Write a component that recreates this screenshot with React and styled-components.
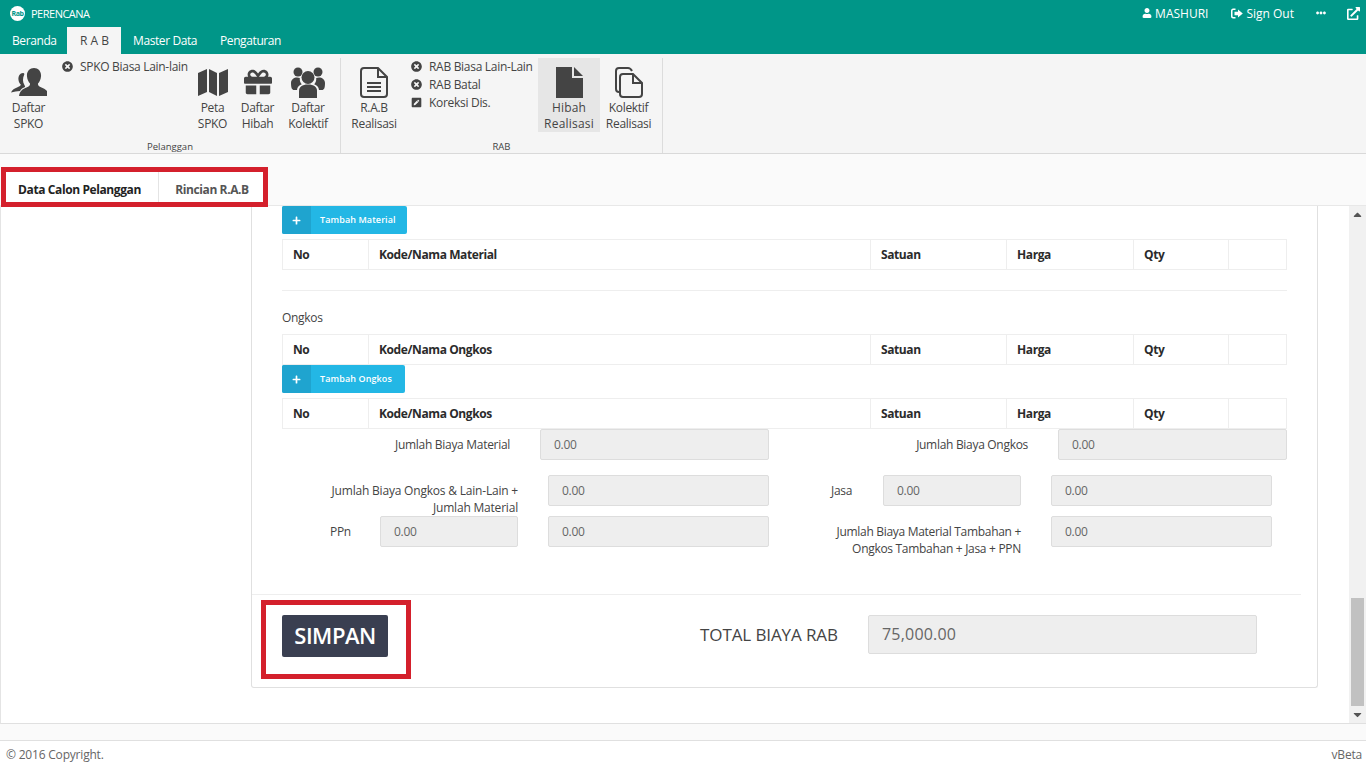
import React from 'react';
import styled, { createGlobalStyle } from 'styled-components';
import {
  FaGift, FaTimesCircle, FaPenSquare, FaUser, FaEllipsisH,
  FaExternalLinkAlt, FaPlus, FaCaretUp, FaCaretDown,
} from 'react-icons/fa';

const GlobalStyle = createGlobalStyle`
  html, body {
    margin: 0;
    padding: 0;
    height: 768px;
    overflow: hidden;
    background: #fff;
    font-family: "Open Sans", "Noto Sans", sans-serif;
    font-size: 12px;
    letter-spacing: -0.3px;
    color: #333;
  }
  * { box-sizing: border-box; }
`;

const Page = styled.div`
  position: relative;
  width: 1366px;
  height: 768px;
  display: flex;
  flex-direction: column;
`;

const Header = styled.header`
  height: 54px;
  background: #009688;
  color: #fff;
  display: flex;
  flex-direction: column;
`;

const TitleBar = styled.div`
  height: 27px;
  display: flex;
  align-items: center;
  padding: 0 6px 1px 10px;
`;

const Logo = styled.span`
  width: 15px;
  height: 15px;
  border-radius: 50%;
  background: #fff;
  color: #009688;
  font-size: 7px;
  font-weight: 700;
  display: flex;
  align-items: center;
  justify-content: center;
  margin-right: 6px;
  letter-spacing: -0.5px;
`;

const AppName = styled.span`
  font-size: 11px;
  flex: 1;
  letter-spacing: -0.5px;
`;

const TopAction = styled.span`
  display: flex;
  align-items: center;
  gap: 3px;
  font-size: 12px;
  letter-spacing: 0;
  margin-left: ${p => p.$gap}px;
  svg { display: block; }
`;

const TabBar = styled.nav`
  height: 27px;
  display: flex;
`;

const MenuTab = styled.div`
  height: 27px;
  width: ${p => p.$width}px;
  padding-left: ${p => p.$pad}px;
  display: flex;
  align-items: center;
  font-size: 12px;
  white-space: nowrap;
  letter-spacing: ${p => (p.$active ? '0' : '-0.4px')};
  background: ${p => (p.$active ? '#f5f5f5' : 'transparent')};
  color: ${p => (p.$active ? '#444' : '#fff')};
`;

const Ribbon = styled.div`
  height: 100px;
  background: #f5f5f5;
  border-bottom: 1px solid #d9d9d9;
  display: flex;
  padding-top: 4px;
`;

const RibbonGroup = styled.section`
  width: ${p => p.$width}px;
  height: 95px;
  border-right: 1px solid #dcdcdc;
  display: flex;
  flex-direction: column;
`;

const RibbonItems = styled.div`
  flex: 1;
  display: flex;
  align-items: flex-start;
  padding-left: ${p => p.$pad}px;
`;

const GroupName = styled.div`
  height: 16px;
  padding-top: 3px;
  text-align: center;
  font-size: 9.5px;
  letter-spacing: 0;
  line-height: 13px;
  color: #444;
`;

const BigButton = styled.div`
  width: ${p => p.$width}px;
  height: 74px;
  display: flex;
  flex-direction: column;
  align-items: center;
  text-align: center;
  font-size: 12px;
  line-height: 16px;
  letter-spacing: ${p => (p.$active ? '0.2px' : '-0.3px')};
  color: #444;
  background: ${p => (p.$active ? '#e6e6e6' : 'transparent')};
  margin-right: ${p => p.$after || 0}px;
`;

const BigIcon = styled.span`
  height: 42px;
  display: flex;
  align-items: center;
  justify-content: center;
  padding-top: 6px;
  color: #444;
`;

const SmallList = styled.div`
  width: ${p => p.$width}px;
  margin-top: -1px;
  display: flex;
  flex-direction: column;
`;

const SmallItem = styled.div`
  height: 18px;
  display: flex;
  align-items: center;
  gap: 7px;
  font-size: 12px;
  color: #444;
  white-space: nowrap;
`;

const TabStrip = styled.div`
  height: 52px;
  background: #fafafa;
  border-bottom: 1px solid #e8e8e8;
  display: flex;
  align-items: flex-end;
  padding-left: 1px;
`;

const PageTab = styled.div`
  height: 35px;
  padding-top: 3px;
  width: ${p => p.$width}px;
  display: flex;
  align-items: center;
  justify-content: center;
  font-size: 12px;
  font-weight: 700;
  letter-spacing: -0.4px;
  color: ${p => (p.$active ? '#222' : '#555')};
  background: #fff;
  border-right: ${p => (p.$active ? '1px solid #e4e4e4' : 'none')};
`;

const Body = styled.div`
  height: 518px;
  display: flex;
  border-left: 1px solid #e4e4e4;
  border-bottom: 1px solid #e0e0e0;
  overflow: hidden;
`;

const Scroller = styled.div`
  flex: 1;
  padding-left: 250px;
  overflow: hidden;
`;

const Card = styled.div`
  width: 1067px;
  height: 482px;
  border: 1px solid #e0e0e0;
  border-top: none;
  border-radius: 0 0 3px 3px;
  display: flex;
  flex-direction: column;
  padding-left: 30px;
`;

const AddButton = styled.div`
  width: ${p => p.$width}px;
  height: 28px;
  background: #23b7e5;
  border-radius: 2px;
  display: flex;
  color: #fff;
  font-size: 9px;
  font-weight: 600;
  letter-spacing: 0.1px;
`;

const AddIcon = styled.span`
  width: 29px;
  background: #1fa4cf;
  border-radius: 2px 0 0 2px;
  display: flex;
  align-items: center;
  justify-content: center;
`;

const AddLabel = styled.span`
  padding: 0 0 1px 9px;
  display: flex;
  align-items: center;
`;

const TableHead = styled.div`
  width: 1005px;
  height: 31px;
  margin-top: ${p => p.$top || 0}px;
  display: grid;
  grid-template-columns: 86px 502px 136px 127px 95px 59px;
  border: 1px solid #eee;
`;

const HeadCell = styled.div`
  padding-left: 10px;
  display: flex;
  align-items: center;
  font-size: 12px;
  font-weight: 700;
  letter-spacing: -0.4px;
  color: #2b2b2b;
  border-right: 1px solid #eee;
  &:last-child { border-right: none; }
`;

const Rule = styled.hr`
  width: 1005px;
  margin: 20px 0 0;
  border: none;
  border-top: 1px solid #eee;
`;

const SectionLabel = styled.div`
  margin-top: 18px;
  height: 17px;
  line-height: 17px;
  font-size: 12px;
  color: #444;
  margin-bottom: 8px;
`;

const FormGrid = styled.div`
  width: 1005px;
  height: 31px;
  display: grid;
  grid-template-columns: 228px 229px 1fr 229px;
  column-gap: 30px;
  align-items: center;
`;

const FormLabel = styled.label`
  text-align: right;
  font-size: 12px;
  color: #444;
`;

const Field = styled.div`
  height: ${p => p.$height || 31}px;
  width: ${p => (p.$width ? `${p.$width}px` : 'auto')};
  grid-column: ${p => p.$col || 'auto'};
  background: #eee;
  border: 1px solid #ddd;
  border-radius: 2px;
  display: flex;
  align-items: center;
  padding-left: 13px;
  padding-bottom: ${p => (p.$size ? 1 : 0)}px;
  font-size: ${p => p.$size || 12}px;
  letter-spacing: ${p => (p.$size ? 0.2 : -0.3)}px;
  color: #666;
`;

const TotalsGrid = styled.div`
  margin-top: ${p => p.$top || 0}px;
  height: 31px;
  padding-left: 48px;
  display: grid;
  grid-template-columns: 50px 138px 30px 221px 62px 52px 138px 30px 221px;
  align-items: start;
`;

const PlainLabel = styled.span`
  grid-column: ${p => p.$col};
  font-size: 12px;
  line-height: 31px;
  color: #444;
  white-space: nowrap;
`;

const WrapLabel = styled.span`
  grid-column: ${p => p.$col};
  text-align: right;
  font-size: 12px;
  line-height: 16.5px;
  letter-spacing: ${p => p.$spacing}px;
  color: #444;
  white-space: nowrap;
  padding-top: ${p => p.$top || 0}px;
`;

const FooterRule = styled.hr`
  width: 1049px;
  margin: 47px 0 0 -30px;
  border: none;
  border-top: 1px solid #eee;
`;

const TotalRow = styled.div`
  margin-top: 20px;
  display: flex;
  align-items: flex-start;
`;

const SaveButton = styled.div`
  width: 106px;
  height: 42px;
  padding-bottom: 2px;
  background: #3a3f51;
  color: #fff;
  font-size: 22px;
  font-weight: 600;
  letter-spacing: -0.5px;
  border-radius: 2px;
  display: flex;
  align-items: center;
  justify-content: center;
`;

const TotalLabel = styled.span`
  margin-left: 312px;
  width: 168px;
  font-size: 17px;
  letter-spacing: -0.1px;
  line-height: 39px;
  color: #444;
`;

const ScrollTrack = styled.div`
  width: 17px;
  height: 517px;
  margin-left: auto;
  background: #f1f1f1;
  display: flex;
  flex-direction: column;
  align-items: center;
  color: #555;
`;

const ScrollArrow = styled.span`
  height: 17px;
  display: flex;
  align-items: center;
  justify-content: center;
`;

const ScrollSpace = styled.div`
  height: 375px;
`;

const ScrollThumb = styled.div`
  width: 13px;
  height: 108px;
  background: #c1c1c1;
`;

const BottomStrip = styled.div`
  height: 17px;
  background: #fafafa;
  border-bottom: 1px solid #e0e0e0;
`;

const Footer = styled.footer`
  height: 27px;
  padding: 0 4px 0 6px;
  display: flex;
  justify-content: space-between;
  align-items: center;
  font-size: 12px;
  letter-spacing: -0.2px;
  color: #666;
`;

const Callout = styled.div`
  position: absolute;
  left: ${p => p.$x}px;
  top: ${p => p.$y}px;
  width: ${p => p.$w}px;
  height: ${p => p.$h}px;
  border: 5px solid #d4202c;
  pointer-events: none;
`;

const PeopleIcon = () => (
  <svg width="36" height="30" viewBox="0 0 36 30" fill="#444">
    <path d="M12 6c-3 0-5 3-4.500 7 .3 2 1.200 3.500 2.300 4.500-.1 1.200-1 1.800-3.300 2.700C3.500 21.300 1 22.700 0 25.500c3-1 6-1.500 9-1.500 .8-2 3-3.200 5-4 .1-1-.3-1.500-.8-2.500-1.500-2.500-1.800-6 .2-10.500C13 6.200 12.500 6 12 6z" />
    <path d="M23 1c-4.500 0-7.500 3.500-7 8.500.3 3 1.500 5.500 3 7 .2 1.800-.8 2.800-3.500 4-3.500 1.400-6.500 3-7.500 8.500h30c-.8-5-3.500-7-7.500-8.500-2.700-1.200-3.700-2.200-3.500-4 1.500-1.500 2.700-4 3-7 .5-5-2.500-8.500-7-8.500z" />
  </svg>
);

const MapIcon = () => (
  <svg width="30" height="29" viewBox="0 0 30 29" fill="#444">
    <path d="M0 5 9 1v23l-9 4z" />
    <path d="M11 1l8 4v23l-8-4z" />
    <path d="M21 5l9-4v23l-9 4z" />
  </svg>
);

const GroupIcon = () => (
  <svg width="34" height="31" viewBox="0 0 34 31" fill="#444">
    <circle cx="7" cy="5" r="4.500" />
    <circle cx="27" cy="5" r="4.500" />
    <circle cx="17" cy="10.500" r="6.500" />
    <path d="M8 31v-7c0-4 3-6.500 9-6.500s9 2.500 9 6.500v7z" />
    <path d="M0 16c0-3.500 3-5.500 6-5.500 1 0 2 .2 2.800 .6-.3 2.500.5 4.700 2 6.200-3 1-4.500 3-4.800 5.700H3c-2 0-3-2-3-7z" />
    <path d="M34 16c0-3.500-3-5.500-6-5.500-1 0-2 .2-2.800 .6 .3 2.500-.5 4.700-2 6.200 3 1 4.500 3 4.800 5.700h3c2 0 3-2 3-7z" />
  </svg>
);

const ReportIcon = () => (
  <svg width="28" height="31" viewBox="0 0 28 31" fill="none" stroke="#444" strokeWidth="2">
    <path d="M4 1h14l9 9v17c0 1.700-1.300 3-3 3H4c-1.700 0-3-1.300-3-3V4c0-1.700 1.300-3 3-3z" />
    <path d="M18 1v9h9" />
    <path d="M7 16h14M7 20h14M7 24h14" />
  </svg>
);

const SolidDocIcon = () => (
  <svg width="27" height="31" viewBox="0 0 27 31" fill="#444">
    <path d="M0 0h16v11h11v20H0z" />
    <path d="M18 0l9 9h-9z" />
  </svg>
);

const CopyIcon = () => (
  <svg width="28" height="31" viewBox="0 0 28 31" fill="none" stroke="#444" strokeWidth="2">
    <path d="M5 25H4c-1.700 0-3-1.300-3-3V4c0-1.700 1.300-3 3-3h9c2 0 3 1 4 3" />
    <path d="M8 7h10l9 9v11c0 1.700-1.300 3-3 3H8c-1.700 0-3-1.300-3-3V10c0-1.700 1.300-3 3-3z" />
    <path d="M18 7v9h9" />
  </svg>
);

const SignOutIcon = () => (
  <svg width="12" height="11" viewBox="0 0 12 11" fill="#fff">
    <path d="M4.500 0.500H2C1 .5 0 1.500 0 2.500v6c0 1 1 2 2 2h2.500V9H2.300c-.4 0-.8-.4-.8-.8V2.800c0-.4.4-.8.800-.8h2.200z" />
    <path d="M7 1.500 11.800 5.500 7 9.500V7.200H3.500V3.800H7z" />
  </svg>
);

const bigButtons = {
  spko: { label: ['Daftar', 'SPKO'], icon: <PeopleIcon /> },
  peta: { label: ['Peta', 'SPKO'], icon: <MapIcon /> },
  hibah: { label: ['Daftar', 'Hibah'], icon: <FaGift size={28} /> },
  kolektif: { label: ['Daftar', 'Kolektif'], icon: <GroupIcon /> },
  rab: { label: ['R.A.B', 'Realisasi'], icon: <ReportIcon /> },
  hibahR: { label: ['Hibah', 'Realisasi'], icon: <SolidDocIcon /> },
  kolektifR: { label: ['Kolektif', 'Realisasi'], icon: <CopyIcon /> },
};

const Big = ({ id, width, active, after }) => (
  <BigButton $width={width} $active={active} $after={after}>
    <BigIcon>{bigButtons[id].icon}</BigIcon>
    <div>{bigButtons[id].label[0]}<br />{bigButtons[id].label[1]}</div>
  </BigButton>
);

const Small = ({ text, edit }) => (
  <SmallItem>
    {edit ? <FaPenSquare size={11} /> : <FaTimesCircle size={11} />}
    {text}
  </SmallItem>
);

const Head = ({ name, top }) => (
  <TableHead $top={top}>
    <HeadCell>No</HeadCell>
    <HeadCell>{name}</HeadCell>
    <HeadCell>Satuan</HeadCell>
    <HeadCell>Harga</HeadCell>
    <HeadCell>Qty</HeadCell>
    <HeadCell />
  </TableHead>
);

const Add = ({ width, children }) => (
  <AddButton $width={width}>
    <AddIcon><FaPlus size={9} /></AddIcon>
    <AddLabel>{children}</AddLabel>
  </AddButton>
);

export default function App() {
  return (
    <Page>
      <GlobalStyle />
      <Header>
        <TitleBar>
          <Logo>Rab</Logo>
          <AppName>PERENCANA</AppName>
          <TopAction><FaUser size={10} />MASHURI</TopAction>
          <TopAction $gap={23}><SignOutIcon />Sign Out</TopAction>
          <TopAction $gap={22}><FaEllipsisH size={10} /></TopAction>
          <TopAction $gap={21}><FaExternalLinkAlt size={13} /></TopAction>
        </TitleBar>
        <TabBar>
          <MenuTab $width={67} $pad={12}>Beranda</MenuTab>
          <MenuTab $width={54} $pad={13} $active>R A B</MenuTab>
          <MenuTab $width={87} $pad={12}>Master Data</MenuTab>
          <MenuTab $width={90} $pad={12}>Pengaturan</MenuTab>
        </TabBar>
      </Header>

      <Ribbon>
        <RibbonGroup $width={341}>
          <RibbonItems $pad={0}>
            <Big id="spko" width={57} after={5} />
            <SmallList $width={128}>
              <Small text="SPKO Biasa Lain-lain" />
            </SmallList>
            <Big id="peta" width={45} />
            <Big id="hibah" width={45} />
            <Big id="kolektif" width={56} />
          </RibbonItems>
          <GroupName>Pelanggan</GroupName>
        </RibbonGroup>
        <RibbonGroup $width={322}>
          <RibbonItems $pad={3}>
            <Big id="rab" width={60} after={7} />
            <SmallList $width={127}>
              <Small text="RAB Biasa Lain-Lain" />
              <Small text="RAB Batal" />
              <Small text="Koreksi Dis." edit />
            </SmallList>
            <Big id="hibahR" width={62} active />
            <Big id="kolektifR" width={57} />
          </RibbonItems>
          <GroupName>RAB</GroupName>
        </RibbonGroup>
      </Ribbon>

      <TabStrip>
        <PageTab $width={158} $active>Data Calon Pelanggan</PageTab>
        <PageTab $width={106}>Rincian R.A.B</PageTab>
      </TabStrip>

      <Body>
        <Scroller>
          <Card>
            <Add width={125}>Tambah Material</Add>
            <Head name="Kode/Nama Material" top={5} />
            <Rule />
            <SectionLabel>Ongkos</SectionLabel>
            <Head name="Kode/Nama Ongkos" />
            <Add width={123}>Tambah Ongkos</Add>
            <Head name="Kode/Nama Ongkos" top={5} />
            <FormGrid>
              <FormLabel>Jumlah Biaya Material</FormLabel>
              <Field>0.00</Field>
              <FormLabel>Jumlah Biaya Ongkos</FormLabel>
              <Field>0.00</Field>
            </FormGrid>
            <TotalsGrid $top={15}>
              <WrapLabel $col="1 / span 2" $top={8} $spacing={-0.2}>
                Jumlah Biaya Ongkos &amp; Lain-Lain +<br />Jumlah Material
              </WrapLabel>
              <Field $col="4">0.00</Field>
              <PlainLabel $col="6">Jasa</PlainLabel>
              <Field $col="7">0.00</Field>
              <Field $col="9">0.00</Field>
            </TotalsGrid>
            <TotalsGrid $top={10}>
              <PlainLabel $col="1">PPn</PlainLabel>
              <Field $col="2">0.00</Field>
              <Field $col="4">0.00</Field>
              <WrapLabel $col="5 / span 3" $top={8} $spacing={-0.3}>
                Jumlah Biaya Material Tambahan +<br />Ongkos Tambahan + Jasa + PPN
              </WrapLabel>
              <Field $col="9">0.00</Field>
            </TotalsGrid>
            <FooterRule />
            <TotalRow>
              <SaveButton>SIMPAN</SaveButton>
              <TotalLabel>TOTAL BIAYA RAB</TotalLabel>
              <Field $width={389} $height={39} $size={16}>75,000.00</Field>
            </TotalRow>
          </Card>
        </Scroller>
        <ScrollTrack>
          <ScrollArrow><FaCaretUp size={13} /></ScrollArrow>
          <ScrollSpace />
          <ScrollThumb />
          <ScrollArrow><FaCaretDown size={13} /></ScrollArrow>
        </ScrollTrack>
      </Body>

      <BottomStrip />
      <Footer>
        <span>© 2016 Copyright.</span>
        <span>vBeta</span>
      </Footer>

      <Callout $x={1} $y={167} $w={267} $h={40} />
      <Callout $x={261} $y={600} $w={150} $h={79} />
    </Page>
  );
}
